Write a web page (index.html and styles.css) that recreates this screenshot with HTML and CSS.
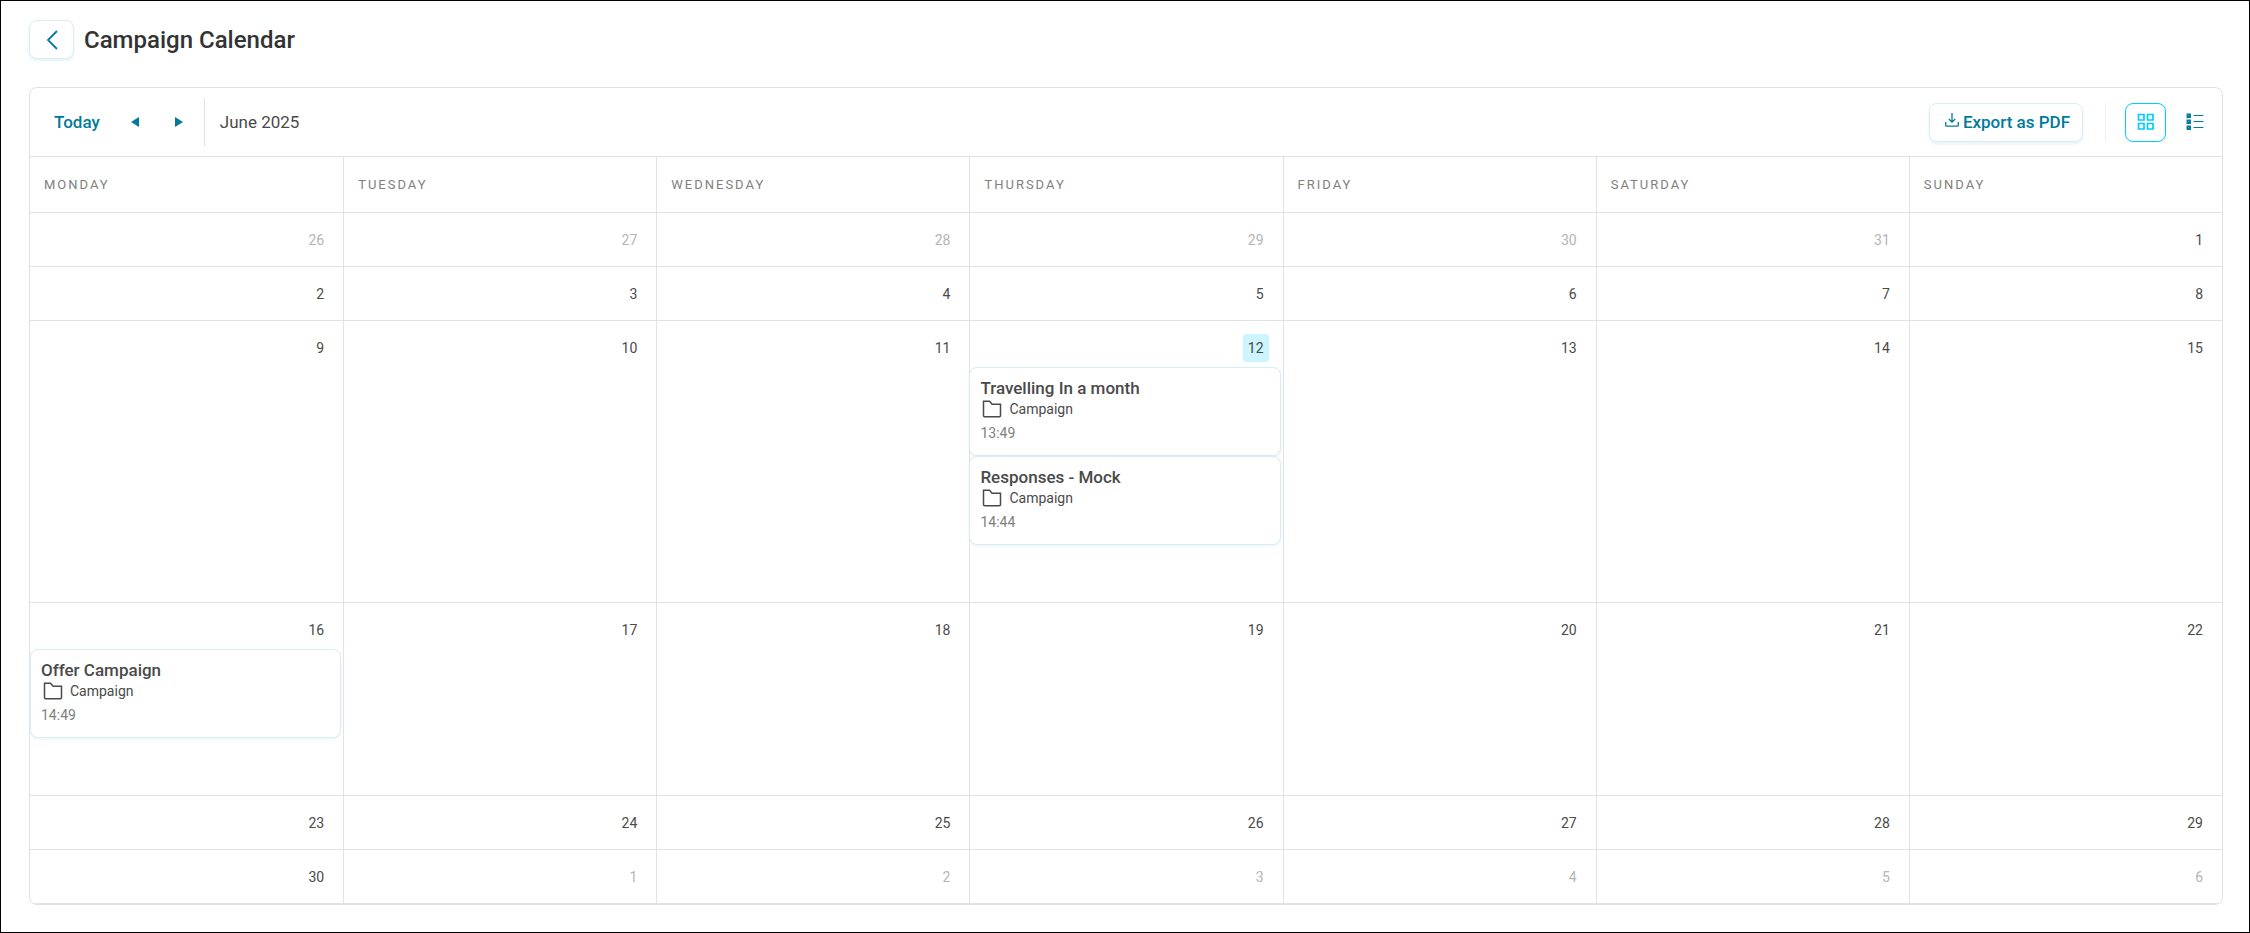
FILE: index.html
```
<!DOCTYPE html>
<html lang="en">
    <head>
        <meta charset="utf-8" />
        <meta name="viewport" content="width=device-width, initial-scale=1" />
        <title>Campaign Calendar</title>
        <link rel="stylesheet" href="styles.css">
    </head>
    <body>
        <svg class="sprite" aria-hidden="true">
            <symbol id="folder" viewBox="0 0 20 18">
                <path d="M1.5 1.2h6l2.6 3h8.4v11.3q0 1.2-1.2 1.2H2.7q-1.2 0-1.2-1.2z" fill="none" stroke="currentColor" stroke-width="1.5"/>
            </symbol>
        </svg>
        <header class="page-header">
            <button class="btn btn--back" type="button" aria-label="Back">
                <svg width="12" height="20" viewBox="0 0 12 20"><path d="M11 1L2 10l9 9" fill="none" stroke="currentColor" stroke-width="1.8"/></svg>
            </button>
            <h1>Campaign Calendar</h1>
        </header>
        <main class="calendar">
            <div class="toolbar">
                <div class="toolbar__nav">
                    <button class="link-btn" type="button">Today</button>
                    <button class="arrow arrow--prev" type="button" aria-label="Previous month">
                        <svg width="8" height="10" viewBox="0 0 8 10"><path d="M8 0v10L0 5z" fill="currentColor"/></svg>
                    </button>
                    <button class="arrow" type="button" aria-label="Next month">
                        <svg width="8" height="10" viewBox="0 0 8 10"><path d="M0 0v10l8-5z" fill="currentColor"/></svg>
                    </button>
                </div>
                <span class="toolbar__month">June 2025</span>
                <button class="btn btn--export" type="button">
                    <svg width="14" height="14" viewBox="0 0 14 14"><path d="M7 0v9M3.8 6L7 9.2 10.2 6M.7 9v3.2q0 1 1 1h10.6q1 0 1-1V9" fill="none" stroke="currentColor" stroke-width="1.3"/></svg>
                    Export as PDF
                </button>
                <div class="toolbar__views">
                    <button class="view view--active" type="button" aria-label="Month view">
                        <svg width="18" height="18" viewBox="0 0 18 18"><path d="M1.5 1.5H7V7H1.5zM10.5 1.5H16V7h-5.5zM1.5 10.5H7V16H1.5zM10.5 10.5H16V16h-5.5z" fill="none" stroke="currentColor" stroke-width="1.7"/></svg>
                    </button>
                    <button class="view" type="button" aria-label="List view">
                        <svg width="18" height="18" viewBox="0 0 18 18"><path d="M1.5 1.5H4V4H1.5zM1.5 7.5H4V10H1.5zM1.5 13.5H4V16H1.5z" fill="none" stroke="currentColor" stroke-width="1.9"/><path d="M8 2.5h9M8 8.5h9M8 14.5h9" stroke="currentColor" stroke-width="1.2" stroke-linecap="round"/></svg>
                    </button>
                </div>
            </div>
            <table class="month">
                <thead>
                    <tr>
                        <th>Monday</th>
                        <th>Tuesday</th>
                        <th>Wednesday</th>
                        <th>Thursday</th>
                        <th>Friday</th>
                        <th>Saturday</th>
                        <th>Sunday</th>
                    </tr>
                </thead>
                <tbody>
                    <tr>
                        <td class="other"><span class="date">26</span></td>
                        <td class="other"><span class="date">27</span></td>
                        <td class="other"><span class="date">28</span></td>
                        <td class="other"><span class="date">29</span></td>
                        <td class="other"><span class="date">30</span></td>
                        <td class="other"><span class="date">31</span></td>
                        <td><span class="date">1</span></td>
                    </tr>
                    <tr>
                        <td><span class="date">2</span></td>
                        <td><span class="date">3</span></td>
                        <td><span class="date">4</span></td>
                        <td><span class="date">5</span></td>
                        <td><span class="date">6</span></td>
                        <td><span class="date">7</span></td>
                        <td><span class="date">8</span></td>
                    </tr>
                    <tr>
                        <td><span class="date">9</span></td>
                        <td><span class="date">10</span></td>
                        <td><span class="date">11</span></td>
                        <td>
                            <span class="date date--today">12</span>
                            <div class="events">
                                <article class="event">
                                    <h2>Travelling In a month</h2>
                                    <p class="event__type"><svg width="20" height="18"><use href="#folder"/></svg>Campaign</p>
                                    <time>13:49</time>
                                </article>
                                <article class="event">
                                    <h2>Responses - Mock</h2>
                                    <p class="event__type"><svg width="20" height="18"><use href="#folder"/></svg>Campaign</p>
                                    <time>14:44</time>
                                </article>
                            </div>
                        </td>
                        <td><span class="date">13</span></td>
                        <td><span class="date">14</span></td>
                        <td><span class="date">15</span></td>
                    </tr>
                    <tr>
                        <td>
                            <span class="date">16</span>
                            <div class="events">
                                <article class="event">
                                    <h2>Offer Campaign</h2>
                                    <p class="event__type"><svg width="20" height="18"><use href="#folder"/></svg>Campaign</p>
                                    <time>14:49</time>
                                </article>
                            </div>
                        </td>
                        <td><span class="date">17</span></td>
                        <td><span class="date">18</span></td>
                        <td><span class="date">19</span></td>
                        <td><span class="date">20</span></td>
                        <td><span class="date">21</span></td>
                        <td><span class="date">22</span></td>
                    </tr>
                    <tr>
                        <td><span class="date">23</span></td>
                        <td><span class="date">24</span></td>
                        <td><span class="date">25</span></td>
                        <td><span class="date">26</span></td>
                        <td><span class="date">27</span></td>
                        <td><span class="date">28</span></td>
                        <td><span class="date">29</span></td>
                    </tr>
                    <tr>
                        <td><span class="date">30</span></td>
                        <td class="other"><span class="date">1</span></td>
                        <td class="other"><span class="date">2</span></td>
                        <td class="other"><span class="date">3</span></td>
                        <td class="other"><span class="date">4</span></td>
                        <td class="other"><span class="date">5</span></td>
                        <td class="other"><span class="date">6</span></td>
                    </tr>
                </tbody>
            </table>
        </main>
    </body>
</html>
```

FILE: styles.css
```
*,*::before,*::after{
    box-sizing: border-box;
}
body{
    margin:0;
    min-height:100vh;
    padding:19px 26px 27px 28px;
    border:1px solid #000;
    background:#fff;
    color:#4a4a4a;
    font-family:Roboto, sans-serif;
    font-size:17px;
}
button{
    padding:0;
    border:0;
    background:none;
    color:#007c9b;
    font:inherit;
    font-weight:500;
    cursor:pointer;
}
svg{
    display:block;
    flex-shrink:0;
}
.sprite{
    position:absolute;
    width:0;
    height:0;
}

.page-header{
    display:flex;
    align-items:center;
    gap:10px;
    margin-bottom:28px;
}
.page-header h1{
    margin:0;
    color:#333;
    font-size:24px;
    font-weight:500;
    line-height:32px;
}
.btn{
    display:flex;
    align-items:center;
    justify-content:center;
    height:39px;
    border:1px solid #d9eef0;
    border-radius:8px;
    background:#fff;
    box-shadow:0 2px 3px rgba(0,124,155,0.1);
}
.btn--back{
    width:45px;
}

.calendar{
    border:1px solid #e2e2e2;
    border-radius:8px;
    overflow:hidden;
}
.toolbar{
    display:flex;
    align-items:center;
    padding:10px 7px 10px 24px;
    border-bottom:1px solid #e2e2e2;
}
.toolbar__nav{
    display:flex;
    align-items:center;
    height:48px;
    padding-right:9px;
    border-right:1px solid #e2e2e2;
}
.arrow{
    display:flex;
    align-items:center;
    justify-content:center;
    width:32px;
    height:32px;
}
.arrow--prev{
    margin:0 12px 0 19px;
}
.toolbar__month{
    margin:0 auto 0 15px;
}
.btn--export{
    gap:4px;
    padding:0 12px 0 15px;
}
.btn--export svg{
    margin-bottom:4px;
}
.toolbar__views{
    display:flex;
    gap:8px;
    margin-left:22px;
    padding-left:19px;
    border-left:1px solid #eee;
}
.view{
    display:flex;
    align-items:center;
    justify-content:center;
    width:41px;
    height:39px;
    border-radius:8px;
}
.view--active{
    border:1px solid #0cf;
    color:#0cf;
}

.month{
    width:100%;
    border-collapse:separate;
    border-spacing:0;
    table-layout:fixed;
}
.month th{
    height:56px;
    padding:0 14px;
    border-bottom:1px solid #e2e2e2;
    color:#808080;
    font-size:13px;
    font-weight:400;
    letter-spacing:2px;
    text-align:left;
    text-transform:uppercase;
}
.month td{
    height:54px;
    padding:0;
    border-bottom:1px solid #e2e2e2;
    vertical-align:top;
}
.month th + th,
.month td + td{
    border-left:1px solid #e2e2e2;
}
.date{
    display:block;
    width:fit-content;
    margin:13px 14px 0 auto;
    padding:0 5px;
    border-radius:3px;
    font-size:14px;
    line-height:28px;
}
.other .date{
    color:#b5b5b5;
}
.date--today{
    background:#ccf5ff;
}

.events{
    margin:5px 2px 57px 0;
}
td + td .events{
    margin-left:-1px;
}
.event{
    height:89px;
    padding:10px;
    border:1px solid #d9eef0;
    border-radius:8px;
    background:#fff;
    box-shadow:0 1px 3px rgba(0,124,155,0.1);
}
.event h2{
    margin:0;
    font-size:17px;
    font-weight:500;
    line-height:20px;
}
.event__type{
    display:flex;
    align-items:center;
    gap:7px;
    margin:0 0 3px 2px;
    font-size:14px;
    line-height:22px;
}
.event time{
    display:block;
    color:#808080;
    font-size:14px;
    line-height:20px;
}
```
